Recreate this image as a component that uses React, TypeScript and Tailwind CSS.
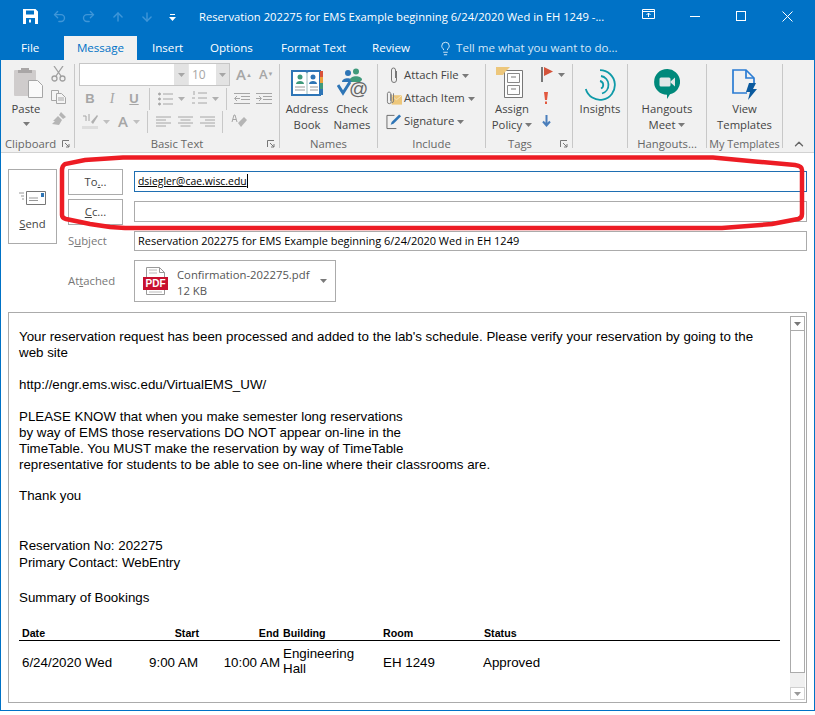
import React from "react";
import { Undo2, Redo2, ArrowUp, ArrowDown, Lightbulb, ChevronUp } from "lucide-react";

const Caret = ({ c = "#7a7a7a", className = "" }: { c?: string; className?: string }) => (
  <svg width="7" height="4" viewBox="0 0 7 4" className={className}><path d="M0 0h7L3.5 4z" fill={c} /></svg>
);
const Launcher = () => (
  <svg width="8" height="8" viewBox="0 0 8 8" fill="none" stroke="#777"><path d="M.5 7V.5H7" /><path d="M3 3l4 4M7 4v3H4" /></svg>
);
const Lines = ({ kind }: { kind: "l" | "c" | "r" }) => {
  const d = kind === "l" ? ["M0 1h15", "M0 4h10", "M0 7h15", "M0 10h10"] : kind === "c" ? ["M0 1h15", "M2.5 4h10", "M0 7h15", "M2.5 10h10"] : ["M0 1h15", "M5 4h10", "M0 7h15", "M5 10h10"];
  return <svg width="15" height="11" viewBox="0 0 15 11" stroke="#a6a6a6">{d.map((x) => <path key={x} d={x} />)}</svg>;
};

const Group = ({ w, label, launcher, labelClass = "text-center", children }: { w: string; label: string; launcher?: boolean; labelClass?: string; children?: React.ReactNode }) => (
  <div className={`${w} h-[84px] shrink-0 border-r border-[#c8c8c8] flex flex-col`}>
    <div className="h-[68px] flex">{children}</div>
    <div className={`h-[16px] leading-[24px] relative text-[#666] whitespace-nowrap ${labelClass}`}>
      {label}
      {launcher && <span className="absolute right-[4px] top-[8px] leading-none"><Launcher /></span>}
    </div>
  </div>
);

const Big = ({ icon, lines, caret, className = "" }: { icon: React.ReactNode; lines: string[]; caret?: boolean; className?: string }) => (
  <div className={`flex flex-col items-center ${className}`}>
    <div className="h-[37px] shrink-0 flex items-center justify-center">{icon}</div>
    {lines.map((l, i) => (
      <div key={l} className="h-[16px] shrink-0 leading-[16px] whitespace-nowrap text-[#444] flex items-center gap-[3px]">
        {l}
        {caret && i === lines.length - 1 && <Caret />}
      </div>
    ))}
  </div>
);

const Include = ({ icon, text }: { icon: React.ReactNode; text: string }) => (
  <div className="h-[23px] flex items-center">
    <div className="w-[16px] flex justify-center">{icon}</div>
    <span className="ml-[2px] text-[#444] whitespace-nowrap">{text}</span>
    <Caret className="ml-[3px]" />
  </div>
);

const Clip = ({ c = "#777" }: { c?: string }) => (
  <svg width="10" height="17" viewBox="0 0 10 17" fill="none" stroke={c}><path d="M7.5 4v9a2.5 2.5 0 0 1-5 0V3a2 2 0 0 1 4 0v8" /></svg>
);

function App() {
  return (
    <div className="relative w-[815px] h-[715px] bg-white overflow-hidden font-['Open_Sans',sans-serif] text-[11.3px]">
      <div className="h-[711px] border-x border-b border-[#0072c6] flex flex-col">
        {/* title bar */}
        <div className="h-[36px] bg-[#0072c6] flex items-center text-white shrink-0">
          <svg width="15" height="15" viewBox="0 0 15 15" className="ml-[22px] mt-[-4px]" fill="#fff"><path fillRule="evenodd" d="M0 0h12.5L15 2.5V15H0zM3 1.5v4h8v-4zM3 9v6h9V9z" /><path d="M6 10.5h2v3H6z" /></svg>
          <Undo2 size={15} color="#3f96d8" strokeWidth={2.2} className="ml-[14px] mt-[-3px]" />
          <Redo2 size={15} color="#3f96d8" strokeWidth={2.2} className="ml-[14px] mt-[-3px]" />
          <ArrowUp size={14} color="#3f96d8" strokeWidth={2.4} className="ml-[15px] mt-[-3px]" />
          <ArrowDown size={14} color="#3f96d8" strokeWidth={2.4} className="ml-[15px] mt-[-3px]" />
          <svg width="7" height="7" viewBox="0 0 7 7" className="ml-[15px] mt-[-1px]" fill="#fff"><path d="M1 0h5v1H1zM0 3h7L3.5 7z" /></svg>
          <span className="ml-[23px] text-[11.23px] mt-[-1px] whitespace-nowrap w-[417px]">Reservation 202275 for EMS Example beginning 6/24/2020 Wed in EH 1249 -...</span>
          <svg width="13" height="10" viewBox="0 0 13 10" fill="none" stroke="#fff" className="ml-[26px] mt-[-8px]"><path d="M.5.5h12v9H.5zM.5 2.5h12" /><path d="M6.5 8V4M4.5 6l2-2 2 2" /></svg>
          <span className="ml-[35px] mt-[-4px] w-[10px] h-px bg-white" />
          <span className="ml-[36px] mt-[-4px] w-[10px] h-[10px] border border-white" />
          <svg width="11" height="11" viewBox="0 0 11 11" stroke="#fff" className="ml-[36px] mt-[-4px]"><path d="M.5.5l10 10M10.5.5l-10 10" /></svg>
        </div>
        {/* tabs */}
        <div className="h-[24px] bg-[#0072c6] flex text-white shrink-0 leading-[24px] text-[11.6px]">
          <span className="ml-[20px] w-[43px]">File</span>
          <span className="w-[73px] bg-[#f1f1f1] text-[#0072c6] text-center">Message</span>
          <span className="ml-[15px] w-[58px]">Insert</span>
          <span className="w-[71px]">Options</span>
          <span className="w-[91px]">Format Text</span>
          <span className="w-[66px]">Review</span>
          <Lightbulb size={15} strokeWidth={1.3} className="mt-[5px]" />
          <span className="ml-[3px] text-[#d5e7f6]">Tell me what you want to do...</span>
        </div>
        {/* ribbon */}
        <div className="h-[93px] bg-[#f1f1f1] border-b border-[#d2d2d2] pt-[4px] flex shrink-0">
          <Group w="w-[74px]" label="Clipboard" launcher labelClass="text-left pl-[4px]">
            <div className="w-[50px]">
              <Big
                icon={
                  <svg width="29" height="31" viewBox="0 0 29 31" className="ml-[4px]">
                    <rect x="0" y="3" width="22" height="26" rx="1" fill="#cfcccc" />
                    <path d="M7 1h8v2h3v3H4V3h3z" fill="#a9a6a6" />
                    <path d="M14.500 13.500h9l5 5v12h-14z" fill="#fafafa" stroke="#a6a6a6" />
                  </svg>
                }
                lines={["Paste"]}
              />
              <div className="flex justify-center mt-[5px]"><Caret /></div>
            </div>
            <div className="w-[15px] flex flex-col items-center pt-[2px] gap-[8px]">
              <svg width="15" height="16" viewBox="0 0 15 16" fill="none" stroke="#a0a0a0" strokeWidth="1.3"><path d="M3 0l7 10M12 0L5 10" /><circle cx="3.500" cy="12.500" r="2.500" /><circle cx="11.500" cy="12.500" r="2.500" /></svg>
              <svg width="15" height="14" viewBox="0 0 15 14" fill="#f4f4f4" stroke="#a6a6a6"><path d="M.5.5h7v10h-7z" /><path d="M5.500 3.500h5l4 4v6h-9z" /><path d="M7 8h6M7 10h6" /></svg>
              <svg width="15" height="15" viewBox="0 0 15 15" fill="#b5b5b5"><path d="M10 0l5 5-3 2-4-4zM7 4l4 4-3 5-7-1 3-3-2 0z" /></svg>
            </div>
          </Group>
          <Group w="w-[205px]" label="Basic Text" launcher>
            <div className="pl-[4px] -mt-px">
              <div className="flex items-center">
                <div className="w-[151px] h-[23px] border border-[#c6c6c6] bg-white flex">
                  <div className="w-[94px]" />
                  <div className="w-[14px] bg-[#e3e3e3] flex items-center justify-center"><Caret c="#a6a6a6" /></div>
                  <div className="w-[28px] border-l border-[#e8e8e8] pl-[3px] leading-[21px] text-[#a6a6a6] text-[12px]">10</div>
                  <div className="flex-1 bg-[#e3e3e3] flex items-center justify-center"><Caret c="#a6a6a6" /></div>
                </div>
                <span className="ml-[6px] w-[22px] text-[15px] text-[#a6a6a6] font-semibold leading-none">A<sup className="text-[6px]">▲</sup></span>
                <span className="w-[20px] ml-[1px] text-[13px] text-[#a6a6a6] font-semibold leading-none">A<sup className="text-[6px]">▼</sup></span>
              </div>
              <div className="flex items-center h-[23px] mt-[1px]">
                <span className="w-[22px] text-center font-['Liberation_Sans'] font-bold text-[#a6a6a6] text-[13px]">B</span>
                <span className="w-[22px] text-center font-['Liberation_Serif'] italic text-[#a6a6a6] text-[14px]">I</span>
                <span className="w-[22px] text-center font-['Liberation_Sans'] font-bold underline text-[#a6a6a6] text-[13px]">U</span>
                <span className="ml-[4px] w-px h-[22px] bg-[#c8c8c8]" />
                <svg width="15" height="14" viewBox="0 0 15 14" className="ml-[8px]" stroke="#a6a6a6" fill="#a6a6a6"><circle cx="1.500" cy="2" r="1" /><circle cx="1.500" cy="7" r="1" /><circle cx="1.500" cy="12" r="1" /><path d="M5 2h10M5 7h10M5 12h10" /></svg>
                <Caret c="#b0b0b0" className="ml-[5px]" />
                <svg width="15" height="15" viewBox="0 0 15 15" className="ml-[7px]" stroke="#a6a6a6"><path d="M6 2h9M6 7h9M6 12h9M2 0v4M0 7h3M0 12h3" /></svg>
                <Caret c="#b0b0b0" className="ml-[5px]" />
                <span className="ml-[7px] w-px h-[22px] bg-[#c8c8c8]" />
                <svg width="16" height="11" viewBox="0 0 16 11" className="ml-[7px]" stroke="#a6a6a6" fill="none"><path d="M0 .5h16M7 3.500h9M7 6.500h9M0 10.500h16M6 5.500H1M3 3L.5 5.500 3 8" /></svg>
                <svg width="16" height="11" viewBox="0 0 16 11" className="ml-[6px]" stroke="#a6a6a6" fill="none"><path d="M0 .5h16M7 3.500h9M7 6.500h9M0 10.500h16M0 5.500h5M3 3l2.500 2.500L3 8" /></svg>
              </div>
              <div className="flex items-center h-[23px]">
                <svg width="16" height="15" viewBox="0 0 16 15" className="ml-[3px]"><path d="M9 8l6-7 1 1-5 8z" fill="#b0b0b0" /><rect y="12" width="16" height="3" fill="#ddd" /><path d="M1 2h3v5M7 0v7" stroke="#a6a6a6" fill="none" /></svg>
                <Caret c="#c0c0c0" className="ml-[5px]" />
                <span className="ml-[8px] text-[15px] font-semibold text-[#a6a6a6]">A</span>
                <Caret c="#c0c0c0" className="ml-[5px]" />
                <span className="ml-[7px] w-px h-[22px] bg-[#c8c8c8]" />
                <span className="ml-[8px]"><Lines kind="l" /></span>
                <span className="ml-[7px]"><Lines kind="c" /></span>
                <span className="ml-[7px]"><Lines kind="r" /></span>
                <span className="ml-[7px] w-px h-[22px] bg-[#c8c8c8]" />
                <svg width="16" height="15" viewBox="0 0 16 15" className="ml-[8px]"><path d="M7 9l6-6 3 3-6 7z" fill="#b5b5b5" /><path d="M1 8l2-7h1l2 7M2 5.500h3" stroke="#a6a6a6" fill="none" /></svg>
              </div>
            </div>
          </Group>
          <Group w="w-[98px]" label="Names">
            <Big
              className="w-[54px]"
              icon={
                <svg width="32" height="28" viewBox="0 0 32 28">
                  <path d="M1 2h14l1 1 1-1h12v24H1z" fill="#fff" stroke="#2e75b6" strokeWidth="2" />
                  <path d="M16 3v22" stroke="#9bb" />
                  <rect x="29" y="2" width="3" height="6" fill="#d9523a" /><rect x="29" y="8" width="3" height="6" fill="#eda03c" /><rect x="29" y="14" width="3" height="6" fill="#3f9a7b" /><rect x="29" y="20" width="3" height="6" fill="#2e75b6" />
                  <circle cx="9" cy="8" r="2.500" fill="#3f9a7b" /><path d="M5 15c0-4 8-4 8 0z" fill="#3f9a7b" />
                  <circle cx="22" cy="8" r="2.500" fill="#2e75b6" /><path d="M18 15c0-4 8-4 8 0z" fill="#2e75b6" />
                  <path d="M4 18h10M4 21h10M19 18h8M19 21h8" stroke="#999" />
                </svg>
              }
              lines={["Address", "Book"]}
            />
            <Big
              className="w-[36px]"
              icon={
                <svg width="31" height="30" viewBox="0 0 31 30">
                  <circle cx="11" cy="5" r="3" fill="#2e75b6" /><path d="M5 14c0-5 11-5 11 0z" fill="#2e75b6" />
                  <circle cx="19" cy="3.500" r="3" fill="#3f9a7b" /><path d="M13 12c0-5 12-5 12 0l-2 2h-8z" fill="#3f9a7b" />
                  <path d="M1 17l5 8 7-11" stroke="#2e75b6" strokeWidth="3" fill="none" />
                  <text x="12" y="27" fontSize="19" fill="#666" fontFamily="Liberation Sans">@</text>
                </svg>
              }
              lines={["Check", "Names"]}
            />
          </Group>
          <Group w="w-[108px]" label="Include">
            <div className="pl-[8px]">
              <Include icon={<Clip />} text="Attach File" />
              <Include
                icon={
                  <svg width="17" height="17" viewBox="0 0 17 17" fill="none"><path d="M6 5h11v10H6z" fill="#edc77b" /><path d="M6 5l5 5 6-5" stroke="#f8e6bf" /><path d="M5.500 4v8a2 2 0 0 1-4 0V3a1.800 1.800 0 0 1 3.500 0v8M8 3v8a2 2 0 0 1-2 2" stroke="#777" /></svg>
                }
                text="Attach Item"
              />
              <Include
                icon={
                  <svg width="17" height="17" viewBox="0 0 17 17" fill="none"><path d="M11 16H1V2h8" stroke="#666" /><path d="M5 12l1-3 8-8 2 2-8 8z" fill="#2e75b6" /></svg>
                }
                text="Signature"
              />
            </div>
          </Group>
          <Group w="w-[87px]" label="Tags" launcher labelClass="text-center pr-[18px]">
            <Big
              className="w-[52px]"
              icon={
                <svg width="27" height="31" viewBox="0 0 27 31" className="-ml-[6px]">
                  <path d="M8.500 3.500h18v27h-18z" fill="#fdfdfd" stroke="#777" />
                  <path d="M11.500 6.500h12v9h-12zM11.500 18.500h12v9h-12z" fill="none" stroke="#888" />
                  <path d="M15 10h5M15 22h5" stroke="#777" />
                  <path d="M0 0h14L9 5 7 8H0z" fill="#edc77b" />
                </svg>
              }
              lines={["Assign", "Policy"]}
              caret
            />
            <div className="pl-[3px] -mt-[1px]">
              <div className="h-[23px] flex items-center">
                <svg width="12" height="15" viewBox="0 0 12 15"><rect width="2" height="15" fill="#777" /><path d="M3 0l9 4.500L3 9z" fill="#d4533a" /></svg>
                <Caret className="ml-[5px]" />
              </div>
              <div className="h-[23px] flex items-center pl-[3px]">
                <svg width="4" height="12" viewBox="0 0 4 12" fill="#e2583e"><path d="M0 0h4L3 8H1zM1 9.500h2V12H1z" /></svg>
              </div>
              <div className="h-[23px] flex items-center pl-[1px]">
                <svg width="9" height="12" viewBox="0 0 9 12" fill="none" stroke="#4a7ebb" strokeWidth="2"><path d="M4.500 0v10M1 6.500l3.500 4 3.500-4" /></svg>
              </div>
            </div>
          </Group>
          <Group w="w-[55px]" label="">
            <Big
              className="w-full"
              icon={
                <svg width="32" height="32" viewBox="0 0 32 32" fill="none" stroke="#0f9aa8" className="mt-[5px]">
                  <path d="M16 1.200A14.800 14.800 0 1 1 1.800 20" strokeWidth="1.800" />
                  <path d="M17 7a9 9 0 0 1 1 17.500" strokeWidth="1.800" />
                  <path d="M16 12a4 4 0 0 1 1 7.500" strokeWidth="1.800" />
                </svg>
              }
              lines={["Insights"]}
            />
          </Group>
          <Group w="w-[79px]" label="Hangouts...">
            <Big
              className="w-full"
              icon={
                <svg width="26" height="30" viewBox="0 0 26 30" className="mt-[3px]">
                  <path d="M13 0a12.800 12.800 0 0 1 3 25.300L13 30v-4.200A12.900 12.900 0 0 1 13 0z" fill="#00897b" />
                  <rect x="5.500" y="8.500" width="11" height="9" rx="1.500" fill="#e2e7e7" />
                  <path d="M16.500 12.500l4.500-4v9l-4.500-4z" fill="#e2e7e7" />
                </svg>
              }
              lines={["Hangouts", "Meet"]}
              caret
            />
          </Group>
          <Group w="w-[76px]" label="My Templates" labelClass="text-center text-[10.8px]">
            <Big
              className="w-full"
              icon={
                <svg width="25" height="31" viewBox="0 0 25 31" fill="none" className="mt-[3px]">
                  <path d="M15 24H1V1h13l8 8v5" stroke="#2b7cd3" strokeWidth="1.700" />
                  <path d="M14 1v8h8" stroke="#2b7cd3" strokeWidth="1.700" />
                  <path d="M17 14h7l-3 6h4l-9 11 2-8h-4z" fill="#0b5a9e" />
                </svg>
              }
              lines={["View", "Templates"]}
            />
          </Group>
          <div className="flex-1 flex justify-center items-start pt-[73px]"><ChevronUp size={14} strokeWidth={2.4} color="#666" /></div>
        </div>
        {/* compose */}
        <div className="flex-1 px-[7px] pt-[16px] flex flex-col text-[#444]">
          <div className="flex h-[133px]">
            <div className="w-[49px] h-[75px] border border-[#ababab] flex flex-col items-center">
              <svg width="27" height="14" viewBox="0 0 27 14" className="mt-[21px]" fill="none"><path d="M7.500.5h19v13h-19z" fill="#fff" stroke="#777" /><path d="M10 7h9M10 9.500h9M0 2h5M2 5h3M3 8h2" stroke="#999" /><rect x="22" y="2" width="3" height="4" fill="#2e75b6" /></svg>
              <div className="mt-[11px] text-[#444] leading-[16px]"><span className="underline">S</span>end</div>
            </div>
            <div className="w-[11px]" />
            <div className="w-[55px] flex flex-col">
              <div className="h-[26px] border border-[#ababab] text-center leading-[24px]">To<span className="underline">.</span>..</div>
              <div className="h-[26px] mt-[4px] border border-[#ababab] text-center leading-[24px]"><span className="underline">C</span>c...</div>
              <div className="h-[16px] mt-[8px] leading-[16px] text-[#777]">S<span className="underline">u</span>bject</div>
              <div className="mt-[24px] leading-[16px] text-[#777]">At<span className="underline">t</span>ached</div>
            </div>
            <div className="ml-[11px] flex-1 flex flex-col pt-[2px]">
              <div className="h-[21px] border border-[#1f6fb2] bg-white pl-[3px] flex items-center text-black text-[10.4px]">
                <span className="underline leading-[14px] border-r border-black">dsiegler@cae.wisc.edu</span>
              </div>
              <div className="h-[21px] mt-[9px] border border-[#ababab]" />
              <div className="h-[21px] mt-[9px] border border-[#ababab] pl-[3px] leading-[18px] text-black whitespace-nowrap text-[10.98px]">Reservation 202275 for EMS Example beginning 6/24/2020 Wed in EH 1249</div>
              <div className="w-[202px] h-[42px] mt-[9px] border border-[#ababab] flex items-center">
                <svg width="25" height="28" viewBox="0 0 25 28" className="ml-[8px]">
                  <path d="M3.500.5h13l5 5v22h-18z" fill="#fff" stroke="#999" />
                  <path d="M16.500.5v5h5" fill="none" stroke="#999" />
                  <path d="M6 3h8M6 6h8M6 22h13M6 25h13" stroke="#bbb" />
                  <rect x="0" y="10" width="25" height="13" fill="#c8102e" />
                  <text x="12.500" y="20" textAnchor="middle" fontSize="10" fontWeight="700" fill="#fff" fontFamily="Liberation Sans">PDF</text>
                </svg>
                <div className="ml-[9px] pt-[3px] leading-[16px] text-[#555] whitespace-nowrap">
                  <div>Confirmation-202275.pdf</div>
                  <div>12 KB</div>
                </div>
                <Caret className="ml-[11px]" />
              </div>
            </div>
          </div>
          <div className="w-[799px] h-[391px] mt-[10px] border border-[#ababab] flex text-black">
            <div className="flex-1 pl-[10px] pt-[16px] font-['Liberation_Sans'] text-[13.33px] leading-[16px]">
              <p>Your reservation request has been processed and added to the lab's schedule. Please verify your reservation by going to the<br />web site</p>
              <p className="mt-[16px]">http://engr.ems.wisc.edu/VirtualEMS_UW/</p>
              <p className="mt-[16px]">PLEASE KNOW that when you make semester long reservations<br />by way of EMS those reservations DO NOT appear on-line in the<br />TimeTable. You MUST make the reservation by way of TimeTable<br />representative for students to be able to see on-line where their classrooms are.</p>
              <p className="mt-[15px]">Thank you</p>
              <p className="mt-[34px]">Reservation No: 202275</p>
              <p className="mt-px">Primary Contact: WebEntry</p>
              <p className="mt-[19px]">Summary of Bookings</p>
              <div className="mt-[20px] w-[761px]">
                <div className="grid grid-cols-[121px_60px_81px_100px_101px_1fr] h-[14px] text-[10.67px] font-bold leading-[14px]">
                  <span className="pl-[3px]">Date</span>
                  <span className="text-right pr-px">Start</span>
                  <span className="text-right pr-[2px]">End</span>
                  <span className="pl-[2px]">Building</span>
                  <span className="pl-[2px]">Room</span>
                  <span className="pl-[2px]">Status</span>
                </div>
                <div className="h-px bg-black" />
                <div className="grid grid-cols-[121px_60px_81px_100px_101px_1fr] items-center mt-[5px] leading-[15px]">
                  <span className="pl-[3px] pt-[2px]">6/24/2020 Wed</span>
                  <span className="text-right pr-[2px] pt-[2px]">9:00 AM</span>
                  <span className="text-right pr-[1px] pt-[2px]">10:00 AM</span>
                  <span className="pl-[2px]">Engineering<br />Hall</span>
                  <span className="pl-[2px] pt-[2px]">EH 1249</span>
                  <span className="pl-px pt-[2px]">Approved</span>
                </div>
              </div>
            </div>
            <div className="w-[15px] mr-px mt-[3px] mb-[2px] flex flex-col">
              <div className="h-[15px] border border-[#ababab] flex items-center justify-center"><Caret c="#777" /></div>
              <div className="h-[342px] border-x border-b border-[#ababab] bg-white" />
              <div className="flex-1 bg-[#f0f0f0]" />
              <div className="h-[13px] border border-[#cfcfcf] flex items-center justify-center"><Caret c="#999" /></div>
            </div>
          </div>
        </div>
      </div>
      {/* hand-drawn annotation */}
      <svg width="815" height="240" className="absolute left-0 top-0 pointer-events-none" fill="none">
        <path d="M123 157.500L85 160L65 164Q62 166 62 170L62 215Q62 218 66 219L90 224L110 227L125 228L722 228L772 224L798 219Q802 218 802 214L802 170Q802 166 795 165L755 161.500L713 157.500Z" stroke="#ed1c24" strokeWidth="4.500" />
      </svg>
    </div>
  );
}

export default App;
